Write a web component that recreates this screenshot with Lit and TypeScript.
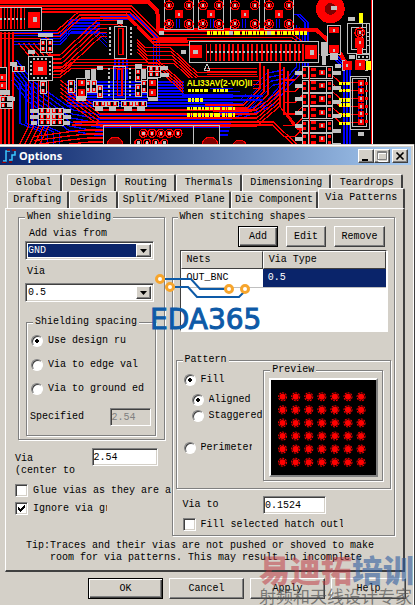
import { LitElement, html, css, svg } from "lit";
import { customElement } from "lit/decorators.js";
import { classMap } from "lit/directives/class-map.js";

type Pt = [number, number];

/** n parallel traces, each shifted by (dx, dy) from the one before */
const bundle = (cls: string, pts: Pt[], n = 1, dx = 0, dy = 9) =>
  Array.from({ length: n }, (_, i) =>
    svg`<polyline class=${cls} points=${pts.map(([x, y]) => `${x + dx * i},${y + dy * i}`).join(" ")} />`
  );

const box = (cls: string, x: number, y: number, w: number, h: number) =>
  svg`<rect class=${cls} x=${x} y=${y} width=${w} height=${h} />`;

const pad = (x: number, y: number, s = 12) => svg`
  <rect class="rf" x=${x - s} y=${y - s} width=${s * 2} height=${s * 2} />
  <rect class="gf" x=${x - 3} y=${y - 5} width="6" height="9" />`;

const ring = (x: number, y: number, r = 14) => svg`
  <circle class="r" cx=${x} cy=${y} r=${r} />
  <circle class="df" cx=${x} cy=${y} r=${r - 6} />
  <rect class="gf" x=${x - 3} y=${y - 5} width="7" height="9" />`;

const range = (n: number) => Array.from({ length: n }, (_, i) => i);

@customElement("pcb-canvas")
export class PcbCanvas extends LitElement {
  static styles = css`
    :host { display: block; background: #000; }
    svg { display: block; width: 100%; }
    .r, .b, .g, .w { fill: none; stroke-width: 4; }
    .r { stroke: #f00; }
    .b { stroke: #00f; }
    .g { stroke: #c0c0c0; stroke-width: 3; }
    .w { stroke: #fff; stroke-width: 3; }
    .thick { stroke-width: 12; }
    .rf { fill: #f00; }
    .df { fill: #800000; stroke: #f00; stroke-width: 3; }
    .gf { fill: #c0c0c0; }
    .yf { fill: #ff0; }
    .kf { fill: #000; }
    .silk { fill: #ff0; font: bold 25px "Liberation Sans", sans-serif; }
    .speck { fill: none; stroke: #ff0; stroke-width: 10; stroke-dasharray: 9 3 5 2 12 4; }
    .dash { fill: none; stroke: #c0c0c0; stroke-width: 6; stroke-dasharray: 6 6; }
  `;

  private chip(x: number, y: number, w: number, h: number) {
    return svg`
      ${box("g", x, y, w, h)}
      ${box("r", x + 13, y + 8, w - 24, h - 20)}
      ${range(7).map((i) => svg`
        ${box("gf", x - 17, y + 4 + i * ((h - 8) / 7), 7, 7)}
        ${box("gf", x + w + 10, y + 4 + i * ((h - 8) / 7), 7, 7)}`)}`;
  }

  private part(x: number, y: number, w: number, h: number, vertical = true) {
    return svg`
      ${box("kf", x, y, w, h)}${box("g", x, y, w, h)}
      ${vertical
        ? svg`${pad(x + w / 2, y + h * 0.27, 6)}${pad(x + w / 2, y + h * 0.75, 6)}`
        : svg`${pad(x + w * 0.27, y + h / 2, 6)}${pad(x + w * 0.75, y + h / 2, 6)}`}`;
  }

  render() {
    return html`<svg viewBox="0 0 1245 432" shape-rendering="crispEdges" role="img" aria-label="Circuit board layout">
      ${bundle("b", [[40, 98], [180, 98], [215, 60], [300, 60]], 5)}
      ${bundle("b", [[180, 100], [280, 100], [345, 165], [345, 240]], 4, 12, 0)}
      ${bundle("b", [[290, 45], [400, 45], [460, 105], [460, 200]], 3, 9, 6)}
      ${bundle("b", [[200, 246], [640, 246], [700, 246]], 9, 0, 9)}
      ${bundle("b", [[50, 180], [100, 245], [220, 330], [300, 345], [700, 345]], 6, -3, 12)}
      ${bundle("b", [[60, 250], [60, 370], [125, 395], [125, 432]], 4, 18, 0)}
      ${bundle("b", [[700, 345], [800, 305], [850, 245], [890, 200], [890, 75]], 3, 9, 6)}
      ${bundle("b", [[850, 43], [890, 43], [915, 68], [915, 200]], 2, 9, 0)}
      ${bundle("b", [[640, 300], [720, 300], [800, 220], [850, 210]], 4, 6, 12)}
      ${bundle("b", [[985, 160], [1032, 205], [1032, 432]], 3, 9, 0)}
      ${bundle("b", [[1075, 240], [1075, 375]], 2, 9, 0)}
      ${bundle("b", [[630, 60], [630, 85]], 4, 6, 0)}
      ${bundle("b", [[510, 44], [530, 44]], 3)}

      <polyline class="r thick" points="0,5 445,5 472,32 475,90 950,90 1015,150 1035,185" />
      ${bundle("r", [[0, 18], [395, 18], [480, 104], [880, 104], [960, 165]], 3, -3, 9)}
      ${bundle("r", [[130, 92], [170, 92], [235, 36], [375, 36], [455, 117], [560, 117]], 3, 4, 9)}
      ${bundle("r", [[150, 165], [180, 165], [290, 62], [350, 62], [435, 142], [510, 142], [590, 217], [770, 217]], 5, 3, 12)}
      ${bundle("r", [[120, 205], [180, 205], [215, 178], [470, 178], [550, 250]], 4, 0, 9)}
      ${bundle("r", [[3, 95], [3, 432]], 4, 12, 0)}
      ${bundle("r", [[56, 130], [85, 165], [85, 380], [60, 432]], 5, 15, 0)}
      ${bundle("r", [[0, 100], [120, 100], [150, 120], [150, 180]], 2, 0, 15)}
      ${bundle("r", [[180, 240], [240, 285], [300, 330], [770, 330], [840, 270]], 5, 0, 12)}
      ${bundle("r", [[100, 410], [210, 395], [260, 390], [310, 390]], 4, 3, 12)}
      ${bundle("r", [[220, 366], [820, 366], [890, 432]], 2, -3, 9)}
      ${bundle("r", [[780, 190], [780, 265], [730, 315], [615, 315]], 3, 12, 9)}
      ${bundle("r", [[840, 190], [840, 320], [880, 375], [920, 375]], 3, 12, 12)}
      ${bundle("r", [[850, 240], [885, 240], [910, 215]], 6, 0, 34)}
      ${bundle("r", [[985, 215], [1020, 248], [1080, 248]], 6, 0, 24)}
      ${bundle("r", [[620, 205], [770, 205]], 3, 0, 9)}

      <rect class="kf" x="552" y="233" width="206" height="48" />
      ${bundle("b", [[545, 288], [790, 288]], 2, 0, 12)}
      ${bundle("b", [[630, 266], [700, 266]], 2, 20, 9)}
      <text class="silk" x="560" y="258">ALI33AV(2-VIO)II</text>
      <path class="speck" d="M565 272H625M640 272H685M565 300H612M560 325H705M560 345H705" />
      <path class="speck" d="M620 99H920M1018 250H1052M1018 272H1052M1018 300H1052M1018 315H1052M1018 345H1052M1018 370H1052" />

      <rect class="kf" x="0" y="24" width="124" height="66" />
      ${box("g", -4, 22, 128, 70)}
      ${bundle("r", [[3, 25], [3, 88]], 8, 10, 0)}
      ${box("rf", 85, 35, 34, 48)}${box("gf", 98, 50, 14, 17)}
      <path class="dash" d="M0 57H75" />

      ${box("kf", 85, 168, 73, 73)}${box("g", 85, 168, 73, 73)}
      ${box("rf", 100, 184, 42, 40)}${box("gf", 114, 201, 16, 13)}
      <path class="dash" d="M100 176H145M100 234H145M92 184V225M151 184V225" />

      <rect class="kf" x="320" y="78" width="90" height="98" />
      ${this.chip(343, 78, 37, 98)}
      ${this.chip(340, 199, 37, 100)}

      ${[[121, 118], [140, 118], [121, 243], [205, 240], [255, 240], [273, 240], [291, 255], [406, 205], [406, 252], [424, 240]].map(
        ([x, y]) => this.part(x, y, 17, 38))}
      ${[[230, 235], [442, 235]].map(([x, y]) => svg`${this.part(x, y, 30, 56)}${pad(x + 15, y + 14, 10)}${pad(x + 15, y + 42, 10)}`)}
      ${[[37, 198], [0, 290], [0, 308], [280, 304], [318, 304], [364, 304], [402, 304], [443, 199], [443, 215],
        [115, 325], [153, 325], [115, 342], [153, 342], [115, 359], [153, 359]].map(([x, y]) => this.part(x, y, 37, 16, false))}
      ${box("kf", -4, 202, 24, 80)}${box("g", -4, 202, 24, 80)}${pad(7, 232, 10)}${pad(7, 256, 10)}
      ${[[114, 100, 46, 12], [84, 150, 22, 12], [30, 186, 20, 12], [350, 60, 18, 12], [255, 210, 14, 28], [272, 207, 16, 33],
        [292, 198, 18, 12], [404, 192, 22, 11], [424, 208, 15, 30], [482, 197, 22, 12], [482, 218, 24, 12], [20, 290, 24, 13],
        [20, 308, 20, 13], [228, 288, 30, 14], [445, 290, 30, 14], [284, 320, 24, 12], [326, 320, 22, 12], [372, 320, 24, 12],
        [410, 320, 26, 12], [90, 327, 24, 12], [90, 345, 24, 12], [92, 362, 20, 12], [190, 327, 22, 12], [190, 345, 22, 12],
        [190, 362, 20, 12], [478, 94, 13, 11], [542, 150, 16, 12], [0, 270, 30, 14], [686, 92, 13, 12], [800, 92, 13, 12]
      ].map(([x, y, w, h]) => box("gf", x, y, w, h))}

      ${[493, 595, 691, 793].map((x, i) => {
        const w = i === 1 ? 75 : 87;
        return svg`${box("kf", x, -3, w, 90)}${box("g", x, -3, w, 90)}
          ${ring(x + 14, 16, 13)}${ring(x + w - 14, 16, 13)}${ring(x + 14, 72, 13)}${ring(x + w - 14, 72, 13)}
          ${bundle("b", [[x + 36, 56], [x + 36, 85]], 2, 9, 0)}${pad(x + w / 2, 43)}`;
      })}

      ${box("kf", 568, 124, 388, 63)}${box("g", 568, 124, 388, 63)}
      ${box("rf", 570, 136, 36, 38)}${box("gf", 580, 150, 13, 12)}
      ${[620, 632, 648, 660, 672, 687, 699, 714, 729, 744, 756, 771, 786, 801, 813, 828, 843, 858, 870, 885, 897, 909].map(
        (x) => bundle("r", [[x, 132], [x, 184]]))}
      <path class="dash" d="M620 155H910" />
      ${box("rf", 915, 134, 36, 43)}${box("gf", 929, 151, 14, 14)}
      <path class="g" d="M612 212L621 192L630 212Z" />
      <rect class="kf" x="310" y="386" width="348" height="50" />
      <path class="g" d="M310 440V377H658V440M392 377V440M580 377V440" />
      ${range(5).map((i) => ring(430 + i * 26, 400, 12))}
      ${range(4).map((i) => ring(415 + i * 26, 428, 10))}
      <circle class="df" cx="345" cy="434" r="23" /><circle class="df" cx="630" cy="434" r="23" /><circle class="df" cx="719" cy="442" r="22" />

      <rect class="kf" x="906" y="198" width="92" height="234" />
      ${range(6).map((i) => svg`
        ${box("g", 906, 200 + i * 40, 92, 36)}
        ${box("g", 924, 200 + i * 40, 55, 36)}
        ${box("rf", 932, 204 + i * 40, 16, 9)}${box("rf", 932, 222 + i * 40, 16, 9)}
        ${pad(966, 217 + i * 40, 8)}
        ${box("rf", 909, 205 + i * 40, 9, 9)}${box("rf", 909, 222 + i * 40, 9, 9)}
        ${box("rf", 984, 205 + i * 40, 9, 9)}${box("rf", 984, 222 + i * 40, 9, 9)}
        ${box("gf", 884, 212 + i * 40, 22, 12)}${box("gf", 1000, 214 + i * 43, 22, 12)}`)}
      <path class="r" d="M928 202V432" />

      <circle class="rf" cx="991" cy="27" r="43" /><circle class="df" cx="991" cy="27" r="19" />${box("gf", 994, 18, 18, 13)}
      ${box("kf", 982, 76, 38, 86)}${box("g", 982, 76, 38, 86)}${box("rf", 986, 80, 30, 20)}${box("rf", 986, 136, 30, 22)}
      ${box("gf", 998, 87, 7, 8)}${box("gf", 998, 147, 7, 8)}${box("gf", 963, 126, 21, 42)}${box("gf", 965, 168, 12, 26)}
      ${box("gf", 990, 160, 25, 20)}${box("gf", 1045, 50, 20, 13)}${box("yf", 1076, 40, 13, 30)}
      ${box("kf", 1042, 70, 66, 90)}${box("g", 1042, 70, 66, 90)}${box("g", 1054, 82, 44, 67)}
      <path class="g" d="M1086 70V160M1100 70V160M1100 96H1108M1100 110H1108M1100 122H1108M1100 136H1108" />
      ${ring(1079, 98, 14)}${pad(1079, 129, 14)}${box("rf", 1072, 140, 14, 50)}
      ${box("kf", 1068, 164, 40, 14)}${box("g", 1068, 164, 40, 14)}<path class="dash" d="M1074 171H1106" />
      ${pad(1041, 196, 14)}${pad(1080, 195, 14)}
      <path class="g" d="M1034 181H1026V210H1034M1094 181H1102V210H1094" />
      ${box("yf", 1098, 183, 16, 26)}${box("gf", 1046, 166, 20, 12)}${box("gf", 1004, 193, 20, 10)}
      ${box("g", 1051, 228, 56, 160)}${box("g", 1058, 236, 42, 144)}
      ${range(6).map((i) => svg`${pad(1083, 250 + i * 23, 9)}${box("rf", 1094, 246 + i * 23, 10, 8)}`)}
      ${box("gf", 1074, 397, 18, 12)}

      <rect class="kf" x="1113" y="0" width="132" height="432" />
      <path class="r" d="M1114 0V432" /><path class="w" d="M1117 0V432" />
    </svg>`;
  }
}

const TAB_ROWS = [
  [["Global", 54], ["Design", 54], ["Routing", 60], ["Thermals", 66], ["Dimensioning", 90], ["Teardrops", 72]],
  [["Drafting", 61], ["Grids", 48], ["Split/Mixed Plane", 114], ["Die Component", 88], ["Via Patterns", 87]],
] as [string, number][][];

@customElement("app-root")
export class AppRoot extends LitElement {
  static styles = css`
    :host { display: block; color: #000; font: 10px/12px "Liberation Mono", "Noto Sans CJK SC", monospace; }
    * { box-sizing: border-box; }
    button, input, select { font: inherit; color: inherit; margin: 0; border-radius: 0; outline: 0; }

    .window { position: relative; background: #d4d0c8; padding: 3px 4px 8px 0; border-right: 1px solid #404040;
      border-bottom: 1px solid #808080; box-shadow: inset 0 1px #d4d0c8, inset -1px 2px #fff; }
    .title { display: flex; align-items: center; height: 18px; padding: 0 3px 0 2px; margin-right: -1px;
      background: linear-gradient(90deg, #0a246a, #a6caf0); color: #fff; }
    .title svg { width: 14px; height: 14px; flex: none; }
    .title h1 { flex: 1; margin: 0 0 0 3px; font: bold 11px/18px "Noto Sans", sans-serif; }
    .sys { width: 16px; height: 14px; padding: 0; display: grid; place-items: center; background: #d4d0c8;
      border: 1px solid; border-color: #fff #404040 #404040 #fff; box-shadow: inset -1px -1px #808080; }
    .sys.close { margin-left: 2px; }
    .sys svg { width: 14px; height: 12px; }

    .tabs { display: flex; }
    .upper { margin: 9px 7px 0 7px; }
    .lower { margin: 0 5px 0 7px; }
    .tab { flex-basis: 0; min-width: 0; height: 17px; padding: 0; background: #d4d0c8; border: 1px solid #fff;
      border-right: 2px solid #404040; border-bottom: 0; border-radius: 2px 2px 0 0; white-space: nowrap; overflow: hidden; }
    .tab.active { position: relative; height: 20px; margin: -3px 0 -1px; padding-bottom: 2px; }

    .panel { margin: 0 5px; padding: 2px 8px 6px 12px; border: 1px solid #fff; border-right: 2px solid #404040;
      border-bottom: 2px solid #404040; }
    .columns { display: grid; grid-template-columns: minmax(0, 11fr) minmax(0, 16fr); }

    fieldset { min-width: 0; margin: 0; padding: 0; border: 1px solid #808080; box-shadow: 1px 1px #fff, inset 1px 1px #fff; }
    legend { padding: 0 2px; background: #d4d0c8; }
    .shield { margin-right: 7px; padding: 5px 8px 3px 6px; }
    .name { display: block; padding-left: 4px; }
    .via { margin-top: 6px; margin-bottom: 5px; padding-left: 2px; }
    .sunken { background: #fff; border: 1px solid; border-color: #808080 #fff #fff #808080; box-shadow: inset 1px 1px #404040, inset -1px -1px #d4d0c8; }
    .combo { display: flex; height: 19px; margin: 1px 2px 0 0; padding: 2px; }
    .combo select { flex: 1; min-width: 0; appearance: none; border: 0; padding: 0; background: #fff; }
    .combo select.picked { background: #0a246a; color: #fff; }
    .arrow { width: 15px; display: grid; place-items: center; background: #d4d0c8; border: 1px solid;
      border-color: #fff #404040 #404040 #fff; box-shadow: inset -1px -1px #808080; }
    .arrow svg { width: 7px; height: 4px; }
    .spacing { margin: 14px 0 0 1px; padding: 7px 4px 9px 3px; }
    .spacing legend { margin-left: 3px; }

    .option { display: flex; align-items: center; height: 12px; white-space: nowrap; }
    .option > span { overflow: hidden; }
    .option input { appearance: none; flex: none; }
    input[type="radio"] { width: 12px; height: 12px; border-radius: 50%; background: #fff; border: 1px solid;
      border-color: #808080 #fff #fff #808080; box-shadow: inset 1px 1px #404040; margin-right: 5px; }
    input[type="radio"]:checked { background: radial-gradient(circle at 5px 5px, #000 2px, #fff 2px); }
    .spacing .option { margin-bottom: 12px; padding-left: 1px; }
    .pair { display: flex; justify-content: space-between; }
    .spacing .pair { margin-top: 13px; align-items: center; height: 18px; }
    .text { height: 18px; padding: 0 1px; }
    .text.off { width: 41px; background: #d4d0c8; color: #808080; }

    .center { margin: 8px 14px 7px -3px; height: 29px; align-items: flex-start; }
    .center label { padding-top: 5px; white-space: pre; }
    .center .text { width: 66px; }
    input[type="checkbox"] { width: 13px; height: 13px; background: #fff; border: 1px solid;
      border-color: #808080 #fff #fff #808080; box-shadow: inset 1px 1px #404040, inset -1px -1px #d4d0c8; margin-right: 5px; }
    .check { display: flex; position: relative; align-items: center; height: 13px; overflow: hidden; }
    .left { margin: 0 0 5px -3px; }
    .left.last { margin-bottom: 0; }
    .check svg { position: absolute; left: 3px; top: 3px; width: 7px; height: 7px; pointer-events: none; }
    .short { width: 74px; }

    .stitch { padding: 3px 3px 4px; }
    .stitch > legend { margin-left: 2px; }
    .actions { display: flex; justify-content: flex-end; gap: 8px; padding-right: 6px; }
    .push { height: 21px; padding: 0; background: #d4d0c8; border: 1px solid; border-color: #fff #404040 #404040 #fff;
      box-shadow: inset -1px -1px #808080; }
    .push.main { border-color: #000; box-shadow: inset 1px 1px #fff, inset -1px -1px #404040, inset -2px -2px #808080; }
    .actions .push { width: 40px; }
    .actions .push.wide { width: 51px; }
    .list { height: 81px; margin: 3px 4px 0; background: #fff; border: 1px solid; border-color: #404040 #fff #fff #404040;
      box-shadow: 1px 1px #fff; }
    table { width: 100%; border-collapse: separate; border-spacing: 0; table-layout: fixed; }
    th { width: 40%; height: 18px; padding: 0 5px; text-align: left; font-weight: normal; background: #d4d0c8; border: 1px solid;
      border-color: #fff #404040 #404040 #fff; }
    th + th { width: 60%; }
    td { height: 19px; padding: 0 6px; border-bottom: 1px solid #c0c0c0; }
    td.picked { background: #0a246a; color: #fff; padding-left: 5px; }

    .pattern { display: grid; grid-template-columns: minmax(0, 87fr) minmax(0, 120fr); margin-top: 23px; padding: 0 7px 7px 0; }
    .pattern > legend { margin-left: 6px; }
    .choices { padding: 8px 0 0 7px; }
    .choices .indent { margin: 8px 0 4px 8px; }
    .choices .indent + .indent { margin: 0 0 20px 8px; }
    .clip { width: 51px; }
    .preview { margin-top: -2px; padding: 2px 4px 3px 5px; }
    .preview legend { margin-left: 1px; }
    .screen { display: block; width: 100%; height: 99px; background: #000; border: 2px solid; border-color: #fff #808080 #808080 #fff; outline: 1px solid #d4d0c8; }
    .screen circle { fill: #f00; }
    .screen .halo { fill: none; stroke: #f00; stroke-dasharray: 2 1; }
    .width { margin: 7px 0 4px; padding: 0 65px 0 7px; height: 18px; }
    .width label { line-height: 17px; }
    .width .text { width: 63px; }
    .hatch { margin-left: 7px; width: 160px; }

    .tip { display: flex; margin: 4px 0 0 8px; white-space: nowrap; }
    .tip p { margin: 0; white-space: pre; }
    .buttons { display: flex; justify-content: flex-end; gap: 6px; padding: 6px 4px 0; }
    .buttons .push { width: 75px; }

    .logo { position: absolute; left: 150px; top: 130px; width: 116px; height: 60px; pointer-events: none; }
    .logo .wire { fill: none; stroke: #0d5aa7; stroke-width: 2; }
    .logo .node { fill: #fff; stroke: #f7a52c; stroke-width: 3; }
    .logo text { fill: #0d5aa7; stroke: #0d5aa7; font: 28px "DejaVu Sans", sans-serif; }
    .brand { position: absolute; right: 0; bottom: 1px; pointer-events: none; white-space: nowrap; font-family: "Noto Sans CJK SC", sans-serif; }
    .brand b { display: block; font-size: 31px; line-height: 34px; font-weight: 900; color: rgba(190, 50, 60, 0.5); }
    .brand i { font-style: normal; color: rgba(50, 95, 160, 0.6); }
    .brand small { display: block; font-size: 17px; line-height: 20px; color: rgba(80, 80, 80, 0.7); }
  `;

  private combo(id: string, value: string, picked = false) {
    return html`<div class="combo sunken">
      <select id=${id} class=${classMap({ picked })}><option>${value}</option></select>
      <span class="arrow" aria-hidden="true"><svg viewBox="0 0 7 4"><path d="M0 0h7L3.5 4z" /></svg></span>
    </div>`;
  }

  private radio(group: string, label: string, checked = false, cls = "") {
    return html`<label class="option ${cls}"><input type="radio" name=${group} .checked=${checked} /><span class=${cls === "edge" ? "clip" : ""}>${label}</span></label>`;
  }

  private tick = html`<svg viewBox="0 0 7 7" shape-rendering="crispEdges"><path d="M0 2v3l2 2 5-5V0L2 4z" /></svg>`;

  render() {
    return html`
      <pcb-canvas></pcb-canvas>
      <main class="window">
        <header class="title">
          <svg viewBox="0 0 14 14" fill="none" stroke-width="1.5"><path stroke="#3cc8ff" d="M1 12h3V2h4M7 11h3V6h3V2" /><path stroke="#900" d="M0 13.5h4M5 1h3M7 13h3M10 1h4" /></svg>
          <h1>Options</h1>
          <button class="sys" aria-label="Minimize"><svg viewBox="0 0 14 12"><path d="M3 9h6v2H3z" /></svg></button>
          <button class="sys" aria-label="Maximize" disabled><svg viewBox="0 0 14 12" fill="none"><path stroke="#fff" d="M3.5 3.5h9v8h-9z" /><path stroke="#808080" d="M2.5 1.5h9v8h-9zM2.5 2.5h9" /></svg></button>
          <button class="sys close" aria-label="Close"><svg viewBox="0 0 14 12"><path fill="none" stroke="#000" stroke-width="1.7" d="M3.5 2.5l7 7M10.5 2.5l-7 7" /></svg></button>
        </header>

        <nav>
          ${TAB_ROWS.map((row, r) => html`<div class="tabs ${r ? "lower" : "upper"}">
            ${row.map(([label, share]) => html`<button class=${classMap({ tab: true, active: label === "Via Patterns" })} style="flex-grow:${share}">${label}</button>`)}
          </div>`)}
        </nav>

        <section class="panel">
          <div class="columns">
            <div>
              <fieldset class="shield">
                <legend>When shielding</legend>
                <label class="name" for="net">Add vias from</label>
                ${this.combo("net", "GND", true)}
                <label class="name via" for="via">Via</label>
                ${this.combo("via", "0.5")}
                <fieldset class="spacing">
                  <legend>Shielding spacing</legend>
                  ${this.radio("spacing", "Use design ru", true)}
                  ${this.radio("spacing", "Via to edge val")}
                  ${this.radio("spacing", "Via to ground ed")}
                  <div class="pair"><label for="spec">Specified</label><input id="spec" class="text sunken off" value="2.54" disabled /></div>
                </fieldset>
              </fieldset>
              <div class="pair center"><label for="pitch">Via
(center to</label><input id="pitch" class="text sunken" value="2.54" /></div>
              <label class="option check left"><input type="checkbox" /><span>Glue vias as they are a</span></label>
              <label class="option check left last"><input type="checkbox" checked />${this.tick}<span class="short">Ignore via gr</span></label>
            </div>

            <fieldset class="stitch">
              <legend>When stitching shapes</legend>
              <div class="actions">
                <button class="push main">Add</button><button class="push">Edit</button><button class="push wide">Remove</button>
              </div>
              <div class="list">
                <table>
                  <thead><tr><th>Nets</th><th>Via Type</th></tr></thead>
                  <tbody><tr><td>OUT_BNC</td><td class="picked">0.5</td></tr></tbody>
                </table>
              </div>
              <fieldset class="pattern">
                <legend>Pattern</legend>
                <div class="choices">
                  ${this.radio("pattern", "Fill", true)}
                  ${this.radio("fill", "Aligned", true, "indent")}
                  ${this.radio("fill", "Staggered", false, "indent")}
                  ${this.radio("pattern", "Perimeter", false, "edge")}
                </div>
                <fieldset class="preview">
                  <legend>Preview</legend>
                  <svg class="screen" viewBox="0 0 104 94">
                    ${range(6).map((j) => range(7).map((i) => svg`
                      <circle cx=${11.5 + i * 13} cy=${16.5 + j * 13} r="3" />
                      <circle class="halo" cx=${11.5 + i * 13} cy=${16.5 + j * 13} r="4" />`))}
                  </svg>
                </fieldset>
              </fieldset>
              <div class="pair width"><label for="edge">Via to</label><input id="edge" class="text sunken" value="0.1524" /></div>
              <label class="option check hatch"><input type="checkbox" /><span>Fill selected hatch outl</span></label>
            </fieldset>
          </div>
          <div class="tip"><span>Tip:</span><p>Traces and their vias are not pushed or shoved to make
room for via patterns. This may result in incomplete</p></div>
        </section>

        <footer class="buttons">
          <button class="push main">OK</button><button class="push">Cancel</button><button class="push">Apply</button><button class="push">Help</button>
        </footer>

        <svg class="logo" viewBox="150 274 116 60" role="img" aria-label="EDA365">
          <path class="wire" d="M165 279H191L200 289H225M175 287H188L197 297H239L244 292" />
          <circle class="node" cx="160" cy="279" r="3.5" /><circle class="node" cx="170" cy="287" r="3.5" />
          <circle class="node" cx="229" cy="289" r="3.5" /><circle class="node" cx="245" cy="289" r="3.5" />
          <text x="150" y="329">EDA365</text>
        </svg>
        <div class="brand"><b>易迪拓<i>培训</i></b><small>射频和天线设计专家</small></div>
      </main>
    `;
  }
}
